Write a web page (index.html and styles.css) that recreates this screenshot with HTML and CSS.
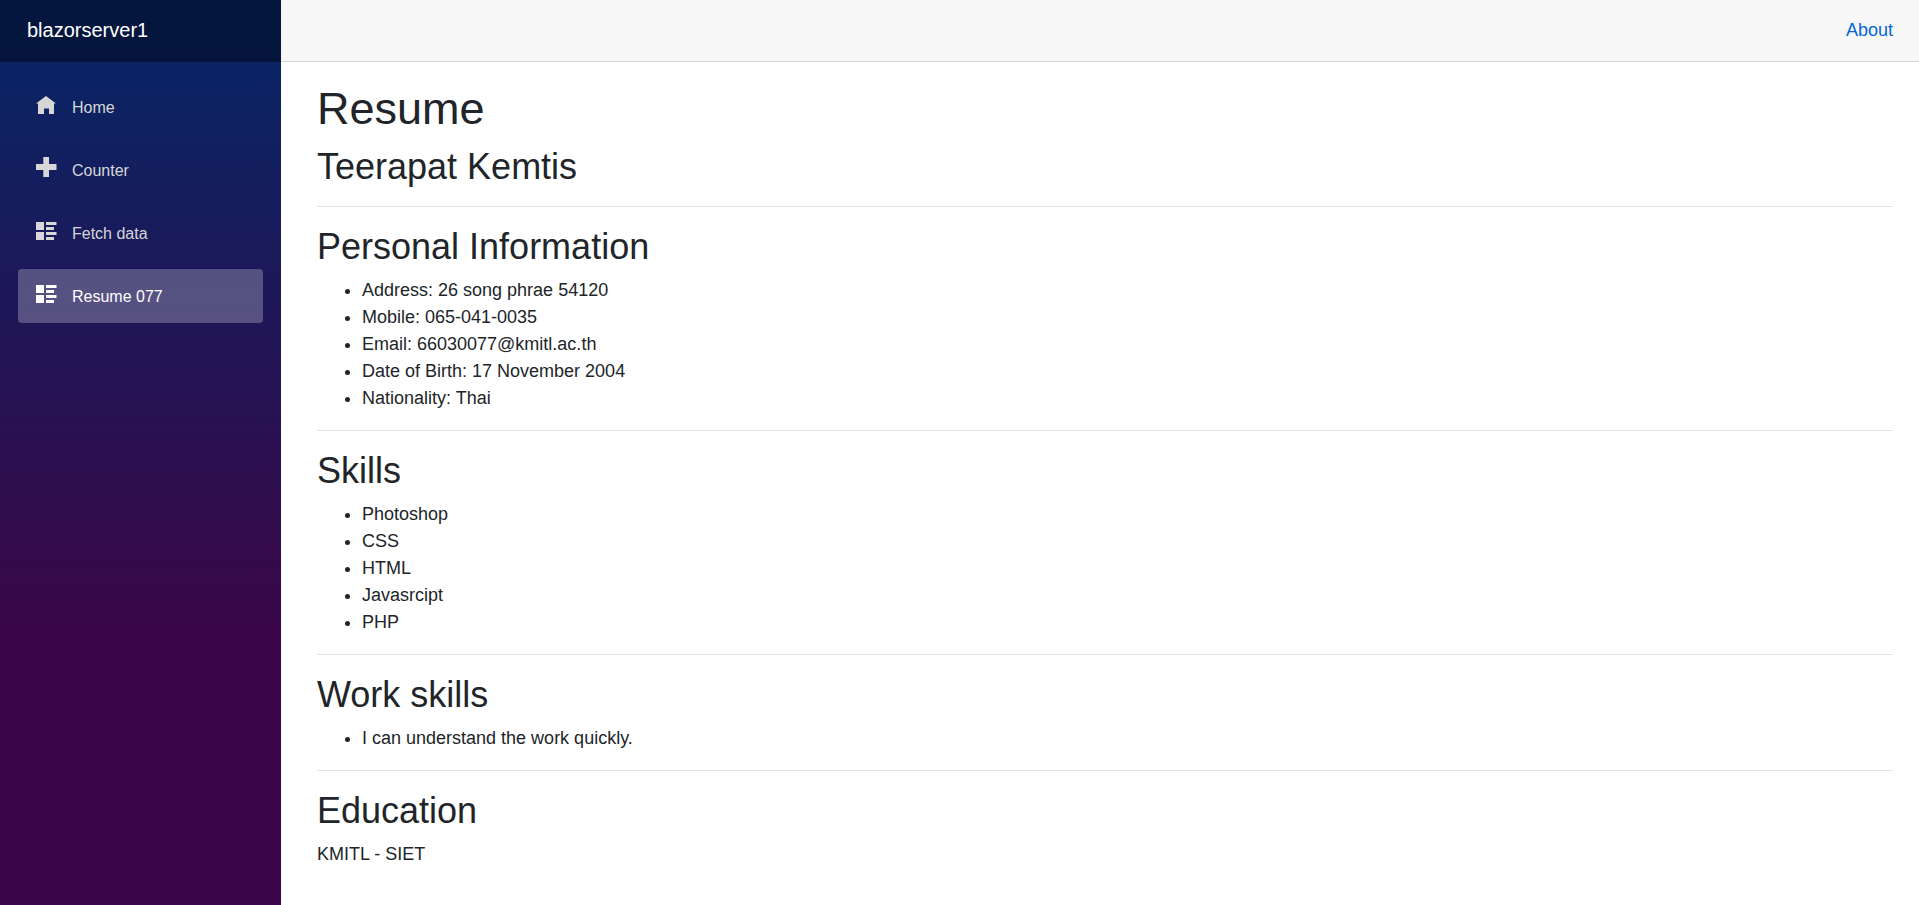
FILE: index.html
```html
<!DOCTYPE html>
<html lang="en">
<head>
<meta charset="utf-8">
<meta name="viewport" content="width=device-width, initial-scale=1">
<title>Resume</title>
<link rel="stylesheet" href="styles.css">
</head>
<body>
<div class="page">
  <div class="sidebar">
    <div class="brand-row"><a class="brand" href="#">blazorserver1</a></div>
    <nav class="nav">
      <a class="nav-link" href="#">
        <svg class="icon" viewBox="0 0 20 20" aria-hidden="true"><path d="M10 0 0 7.500H2V18H8V12.500H13V18H18V7.500H20Z"/></svg>
        Home
      </a>
      <a class="nav-link" href="#">
        <svg class="icon" viewBox="0 0 20 20" aria-hidden="true"><path d="M7.300-2H13V5H20.500V11H13V18H7.300V11H0V5H7.300Z"/></svg>
        Counter
      </a>
      <a class="nav-link" href="#">
        <svg class="icon" viewBox="0 0 20 20" aria-hidden="true"><path d="M0 0H8V8H0ZM10 0H20.500V3H10ZM10 5H18V8H10ZM0 10H8V18H0ZM10 10H20.500V13H10ZM10 15H18V18H10Z"/></svg>
        Fetch data
      </a>
      <a class="nav-link active" href="#" aria-current="page">
        <svg class="icon" viewBox="0 0 20 20" aria-hidden="true"><path d="M0 0H8V8H0ZM10 0H20.500V3H10ZM10 5H18V8H10ZM0 10H8V18H0ZM10 10H20.500V13H10ZM10 15H18V18H10Z"/></svg>
        Resume 077
      </a>
    </nav>
  </div>
  <main class="main">
    <div class="top-row"><a class="about" href="#">About</a></div>
    <article class="content">
      <h1 class="title">Resume</h1>
      <h2 class="heading">Teerapat Kemtis</h2>
      <hr class="rule">
      <h2 class="heading">Personal Information</h2>
      <ul class="list">
        <li>Address: 26 song phrae 54120</li>
        <li>Mobile: 065-041-0035</li>
        <li>Email: 66030077@kmitl.ac.th</li>
        <li>Date of Birth: 17 November 2004</li>
        <li>Nationality: Thai</li>
      </ul>
      <hr class="rule">
      <h2 class="heading">Skills</h2>
      <ul class="list">
        <li>Photoshop</li>
        <li>CSS</li>
        <li>HTML</li>
        <li>Javasrcipt</li>
        <li>PHP</li>
      </ul>
      <hr class="rule">
      <h2 class="heading">Work skills</h2>
      <ul class="list">
        <li>I can understand the work quickly.</li>
      </ul>
      <hr class="rule">
      <h2 class="heading">Education</h2>
      <p class="text">KMITL - SIET</p>
    </article>
  </main>
</div>
</body>
</html>
```
FILE: styles.css
```css
* { box-sizing: border-box; }

body {
  margin: 0;
  background: #fff;
  color: #212529;
  font-family: "Liberation Sans", Arial, sans-serif;
  font-size: 18px;
  line-height: 27px;
}

.page {
  display: flex;
  min-height: 100vh;
}

.sidebar {
  flex: 0 0 281px;
  background-image: linear-gradient(180deg, rgb(5, 39, 103) 0%, #3a0647 70%);
}

.brand-row {
  display: flex;
  align-items: center;
  height: 62px;
  padding: 0 27px 2px;
  background: rgba(0, 0, 0, 0.4);
}

.brand {
  color: #fff;
  font-size: 20px;
  text-decoration: none;
}

.nav {
  display: flex;
  flex-direction: column;
  gap: 9px;
  padding: 18px;
}

.nav-link {
  display: flex;
  align-items: center;
  gap: 16px;
  height: 54px;
  padding: 0 18px;
  border-radius: 4px;
  color: #d7d7d7;
  font-size: 16px;
  text-decoration: none;
}

.nav-link.active {
  background: rgba(255, 255, 255, 0.25);
  color: #fff;
}

.icon {
  width: 20px;
  height: 20px;
  margin-bottom: 2px;
  fill: currentColor;
  overflow: visible;
}

.main {
  flex: 1;
  min-width: 0;
}

.top-row {
  display: flex;
  align-items: center;
  justify-content: flex-end;
  height: 62px;
  padding: 0 26px 0 36px;
  border-bottom: 1px solid #d6d5d5;
  background: #f7f7f7;
}

.about {
  color: #0366d6;
  text-decoration: none;
}

.content { padding: 20px 26px 0 36px; }

.title,
.heading {
  margin: 0 0 9px;
  font-weight: 500;
}

.title {
  font-size: 45px;
  line-height: 54px;
}

.heading {
  font-size: 36px;
  line-height: 43px;
}

.rule {
  height: 1px;
  margin: 18px 0;
  border: 0;
  background: #e3e3e4;
}

.list {
  margin: 0 0 18px;
  padding-left: 45px;
}

.text { margin: 0 0 18px; }
```
